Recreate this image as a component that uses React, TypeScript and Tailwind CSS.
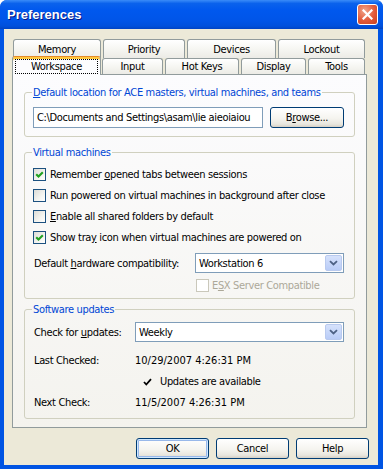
import React from 'react';

function CheckBox({ checked = false, disabled = false }: { checked?: boolean; disabled?: boolean }) {
  return (
    <span
      className={`w-[13px] h-[13px] shrink-0 border flex items-center justify-center ${
        disabled
          ? 'border-[#CAC8BB] bg-white'
          : 'border-[#1C5180] bg-[linear-gradient(135deg,#DCDCD7,#F4F4F0_60%,#FFFFFF)]'
      }`}
    >
      {checked && (
        <svg width="11" height="11" viewBox="0 0 11 11">
          <path d="M2.2 5.2l2.3 2.4L8.8 3.2" fill="none" stroke="#21A121" strokeWidth="2.1" />
        </svg>
      )}
    </span>
  );
}

function Combo({ value, className = '' }: { value: string; className?: string }) {
  return (
    <div className={`h-[20px] border border-[#7F9DB9] bg-white flex items-center ${className}`}>
      <span className="flex-1 pl-[3px] whitespace-nowrap">{value}</span>
      <span className="w-[17px] h-[16px] mr-px rounded-[2px] border border-[#B9CAEF] bg-[linear-gradient(to_bottom,#D6E2FC,#B9CCF7)] flex items-center justify-center">
        <svg width="9" height="6" viewBox="0 0 9 6">
          <path d="M1 1.2l3.5 3.3L8 1.2" fill="none" stroke="#4D6185" strokeWidth="1.8" />
        </svg>
      </span>
    </div>
  );
}

function XPButton({ children, isDefault = false, className = '' }: { children: React.ReactNode; isDefault?: boolean; className?: string }) {
  return (
    <div
      className={`h-[21px] rounded-[3px] border border-[#003C74] bg-[linear-gradient(to_bottom,#FFFFFF_0%,#F5F4EF_55%,#E8E6DE_85%,#D6D0C5_100%)] flex items-center justify-center ${
        isDefault ? 'shadow-[inset_0_0_0_1px_#CEE7FF,inset_0_0_0_2px_#98B8EA]' : ''
      } ${className}`}
    >
      {children}
    </div>
  );
}

function Tab({ label, className = '' }: { label: string; className?: string }) {
  return (
    <div
      className={`h-full rounded-t-[3px] border border-b-0 border-[#919B9C] bg-[linear-gradient(to_bottom,#FFFFFF,#F6F6F2_50%,#ECEBE6)] flex items-center justify-center ${className}`}
    >
      {label}
    </div>
  );
}

function Row({ children }: { children: React.ReactNode }) {
  return <div className="h-[21px] flex items-center whitespace-nowrap">{children}</div>;
}

export default function App() {
  return (
    <div className="w-[383px] h-[469px] flex flex-col bg-[#0054E3] rounded-t-[7px] font-['DejaVu_Sans_Condensed','DejaVu_Sans',sans-serif] text-[11px] leading-[13px] tracking-[-0.35px] text-black">
      {/* title bar */}
      <div className="h-[29px] shrink-0 rounded-t-[7px] bg-[linear-gradient(to_bottom,#3A8CF8_0%,#0A62EC_12%,#0058EE_35%,#0055E8_70%,#0050DC_90%,#0043C4_100%)] flex items-center justify-between pl-[7px] pr-[5px]">
        <span className="font-['Liberation_Sans',sans-serif] font-bold text-[13px] tracking-normal text-white [text-shadow:1px_1px_#0A1883]">
          Preferences
        </span>
        <div className="w-[21px] h-[21px] rounded-[3px] border border-white bg-[radial-gradient(circle_at_35%_30%,#F0A58A,#E2593A_55%,#C8401F)] flex items-center justify-center">
          <svg width="11" height="11" viewBox="0 0 11 11">
            <path d="M1.5 1.5l8 8M9.5 1.5l-8 8" stroke="white" strokeWidth="2.2" strokeLinecap="square" />
          </svg>
        </div>
      </div>

      {/* client area */}
      <div className="flex-1 ml-[4px] mr-[5px] mb-[4px] bg-[#ECE9D8] flex flex-col pl-[8px] pt-[10px]">
        {/* tabs */}
        <div className="h-[19px] flex gap-[2px] pl-[1px]">
          <Tab label="Memory" className="w-[88px]" />
          <Tab label="Priority" className="w-[82px]" />
          <Tab label="Devices" className="w-[89px]" />
          <Tab label="Lockout" className="w-[87px]" />
        </div>
        <div className="h-[16px] flex items-end">
          <div className="relative z-10 w-[89px] h-[19px] -mb-px rounded-t-[3px] border border-b-0 border-[#919B9C] border-t-[#E68B2C] shadow-[inset_0_2px_0_#FFC73C] bg-[#FCFCFE] flex px-[2px] pt-[2px] pb-[1px]">
            <span className="flex-1 border border-dotted border-black flex items-center justify-center">Workspace</span>
          </div>
          <Tab label="Input" className="w-[61px] ml-px" />
          <Tab label="Hot Keys" className="w-[74px] ml-[2px]" />
          <Tab label="Display" className="w-[65px] ml-[2px]" />
          <Tab label="Tools" className="w-[57px] ml-[2px]" />
        </div>

        {/* panel */}
        <div className="w-[355px] h-[354px] border border-[#919B9C] bg-[linear-gradient(to_bottom,#FCFCFE,#F4F3EE)] px-[11px] pt-[11px]">
          <fieldset className="border border-[#D0D0BF] rounded-[3px] px-[8px] pb-[8px]">
            <legend className="px-px -ml-px text-[#0046D5] whitespace-nowrap">
              <u>D</u>efault location for ACE masters, virtual machines, and teams
            </legend>
            <div className="flex gap-[7px] pt-[8px]">
              <div className="w-[230px] h-[21px] border border-[#7F9DB9] bg-white flex items-center pl-[3px] overflow-hidden whitespace-nowrap">
                C:\Documents and Settings\asam\lie aieoiaiou
              </div>
              <XPButton className="w-[74px]">
                <span>
                  B<u>r</u>owse...
                </span>
              </XPButton>
            </div>
          </fieldset>

          <fieldset className="mt-[9px] border border-[#D0D0BF] rounded-[3px] px-[8px] pb-[6px]">
            <legend className="px-px -ml-px text-[#0046D5]">Virtual machines</legend>
            <div className="pt-[5px]">
              <Row>
                <CheckBox checked />
                <span className="ml-[4px]">
                  Remember <u>o</u>pened tabs between sessions
                </span>
              </Row>
              <Row>
                <CheckBox />
                <span className="ml-[4px]">Run powered on virtual machines in background after close</span>
              </Row>
              <Row>
                <CheckBox />
                <span className="ml-[4px]">
                  <u>E</u>nable all shared folders by default
                </span>
              </Row>
              <Row>
                <CheckBox checked />
                <span className="ml-[4px]">
                  Show tra<u>y</u> icon when virtual machines are powered on
                </span>
              </Row>
            </div>
            <div className="mt-[5px] flex items-center whitespace-nowrap">
              <span className="w-[162px] pl-px">
                Default <u>h</u>ardware compatibility:
              </span>
              <Combo value="Workstation 6" className="w-[149px]" />
            </div>
            <div className="mt-[6px] flex items-center pl-[163px] whitespace-nowrap">
              <CheckBox disabled />
              <span className="ml-[3px] text-[#ACA899]">
                E<u>S</u>X Server Compatible
              </span>
            </div>
          </fieldset>

          <fieldset className="mt-[4px] border border-[#D0D0BF] rounded-[3px] px-[8px] pb-[5px]">
            <legend className="px-px -ml-px text-[#0046D5]">Software updates</legend>
            <div className="mt-[6px] flex items-center whitespace-nowrap">
              <span className="w-[102px] pl-px">
                Check for <u>u</u>pdates:
              </span>
              <Combo value="Weekly" className="w-[209px]" />
            </div>
            <div className="mt-[8px]">
              <Row>
                <span className="w-[102px] pl-px">Last Checked:</span>
                <span className="tracking-normal">10/29/2007 4:26:31 PM</span>
              </Row>
              <Row>
                <span className="w-[102px]" />
                <svg width="9" height="8" viewBox="0 0 9 8" className="ml-[8px]">
                  <path d="M1 4l2.3 2.5L8 1.2" fill="none" stroke="black" strokeWidth="1.8" />
                </svg>
                <span className="ml-[8px]">Updates are available</span>
              </Row>
              <Row>
                <span className="w-[102px] pl-px">Next Check:</span>
                <span className="tracking-normal">11/5/2007 4:26:31 PM</span>
              </Row>
            </div>
          </fieldset>
        </div>

        {/* buttons */}
        <div className="mt-[10px] flex justify-end gap-[7px] pr-[9px]">
          <XPButton isDefault className="w-[73px]">OK</XPButton>
          <XPButton className="w-[73px]">Cancel</XPButton>
          <XPButton className="w-[73px]">Help</XPButton>
        </div>
      </div>
    </div>
  );
}
